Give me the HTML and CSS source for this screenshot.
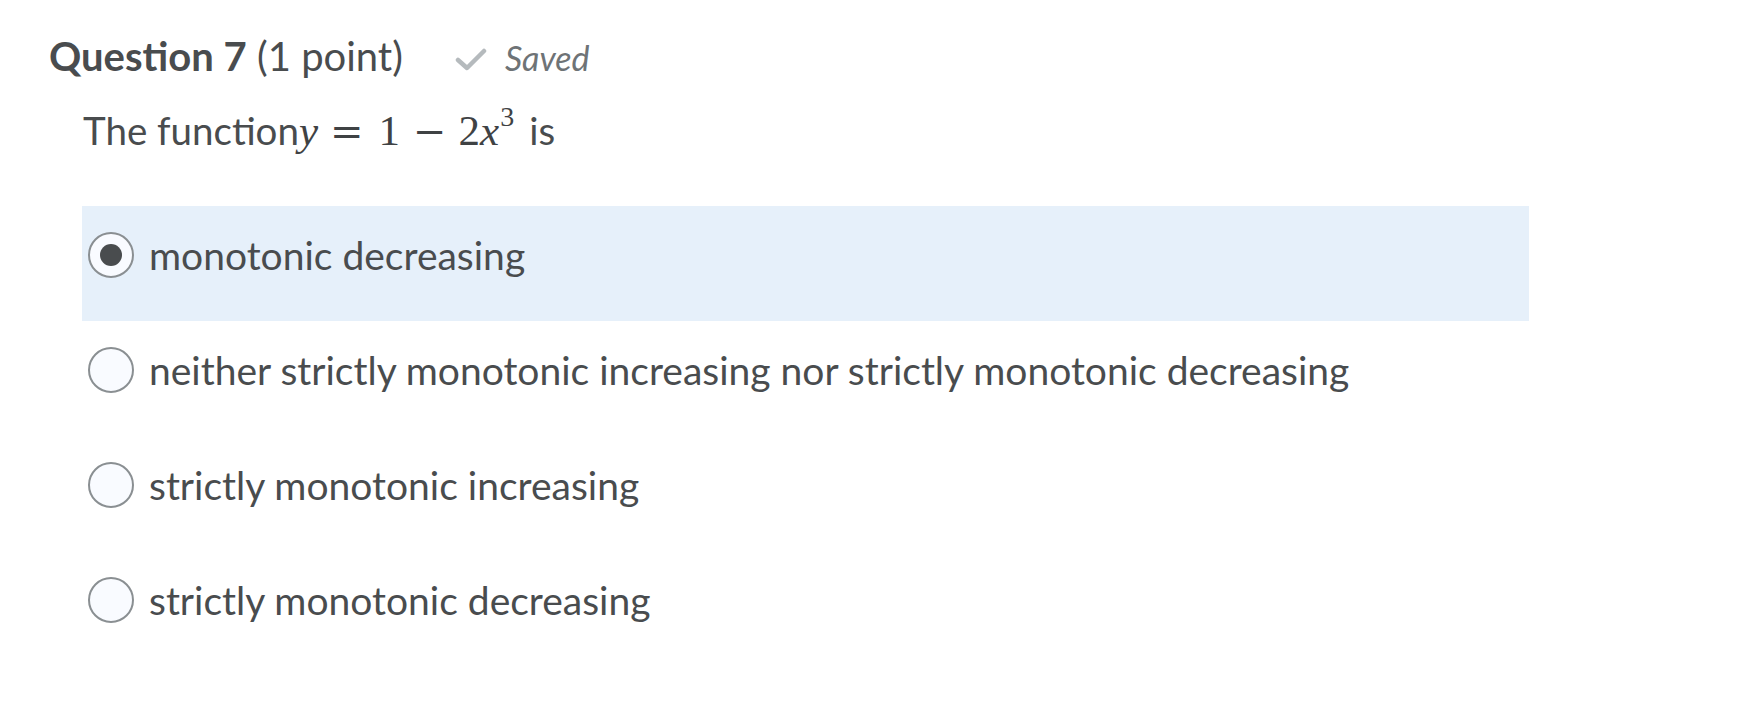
FILE: index.html
```html
<!DOCTYPE html>
<html lang="en">
<head>
<meta charset="utf-8">
<title>Question 7</title>
<link rel="stylesheet" href="styles.css">
</head>
<body>
<div class="page">
  <div class="q-header">
    <h2 class="q-title"><strong>Question 7</strong> (1 point)</h2>
    <span class="saved">
      <svg class="check" width="32" height="24" viewBox="0 0 32 24"><path d="M3 13 L12 21 L29 4" fill="none" stroke="#b5babd" stroke-width="4.5" stroke-linecap="round" stroke-linejoin="round"/></svg>
      <em>Saved</em>
    </span>
  </div>
  <p class="q-text">The function<span class="math"><i class="mi-y">y</i><span class="mo mo-eq">=</span><span class="mn">1</span><span class="mo mo-minus">−</span><span class="mn">2</span><i>x</i><sup>3</sup></span>is</p>
  <div class="options">
    <label class="option selected"><span class="radio"><span class="dot"></span></span><span class="opt-text">monotonic decreasing</span></label>
    <label class="option"><span class="radio"></span><span class="opt-text">neither strictly monotonic increasing nor strictly monotonic decreasing</span></label>
    <label class="option"><span class="radio"></span><span class="opt-text">strictly monotonic increasing</span></label>
    <label class="option"><span class="radio"></span><span class="opt-text">strictly monotonic decreasing</span></label>
  </div>
</div>
</body>
</html>
```

FILE: styles.css
```css
html, body {
  margin: 0;
  padding: 0;
  background: #ffffff;
}
body {
  font-family: Lato, "Noto Sans", sans-serif;
  color: #494c4e;
}
.page {
  padding: 28px 0 0 49px;
}
.q-header {
  display: flex;
  align-items: baseline;
  height: 56px;
}
.q-title {
  margin: 0;
  font-size: 40px;
  font-weight: 400;
  line-height: 56px;
}
.q-title strong {
  font-weight: 700;
}
.saved {
  display: inline-flex;
  align-items: baseline;
  margin-left: 52px;
  color: #6e7376;
  font-size: 34px;
}
.check {
  margin-right: 18px;
}
.saved em {
  font-style: italic;
}
.q-text {
  margin: 18px 0 0 34px;
  font-size: 38.5px;
  line-height: 56px;
}
.math {
  font-family: "Liberation Serif", "DejaVu Serif", serif;
  font-size: 43px;
  color: #3f4244;
}
.math i {
  font-style: italic;
}
.mo {
  font-family: "DejaVu Serif", serif;
  font-weight: 300;
  font-size: 40px;
}
.mo-eq {
  margin: 0 15px 0 12px;
}
.mo-minus {
  margin: 0 12px 0 13px;
}
.math sup {
  font-size: 28px;
  line-height: 0;
  vertical-align: 19px;
  margin-left: 1px;
  margin-right: 15px;
}
.options {
  margin: 47px 0 0 33px;
  width: 1447px;
}
.option {
  display: flex;
  align-items: flex-start;
  height: 115px;
  box-sizing: border-box;
  padding: 26px 0 0 6px;
}
.option.selected {
  background: #e6f0fa;
}
.radio {
  flex: none;
  width: 46px;
  height: 46px;
  box-sizing: border-box;
  border: 2px solid #8a8f92;
  border-radius: 50%;
  background: #f9fbff;
  display: flex;
  align-items: center;
  justify-content: center;
}
.dot {
  width: 22px;
  height: 22px;
  border-radius: 50%;
  background: #494c4e;
}
.opt-text {
  margin-left: 15px;
  font-size: 39px;
  line-height: 46px;
}
```
